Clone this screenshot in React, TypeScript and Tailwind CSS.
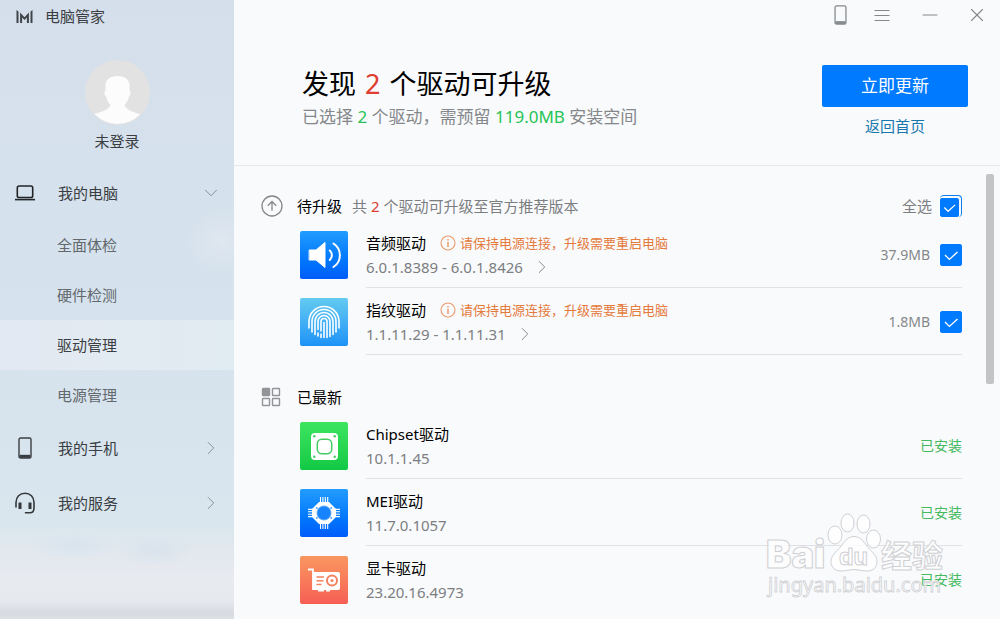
import React, { useState } from 'react';
import { Minus, X, ChevronDown, ChevronRight } from 'lucide-react';
import { clsx } from 'clsx';

type IconProps = { className?: string };

const pending = [
  { id: 'audio', name: '音频驱动', version: '6.0.1.8389 - 6.0.1.8426', size: '37.9MB', Icon: AudioIcon },
  { id: 'finger', name: '指纹驱动', version: '1.1.11.29 - 1.1.11.31', size: '1.8MB', Icon: FingerprintIcon },
];

const latest = [
  { name: 'Chipset驱动', version: '10.1.1.45', Icon: ChipsetIcon },
  { name: 'MEI驱动', version: '11.7.0.1057', Icon: MeiIcon },
  { name: '显卡驱动', version: '23.20.16.4973', Icon: GpuIcon },
];

const subItems = ['全面体检', '硬件检测', '驱动管理', '电源管理'];

function Logo({ className }: IconProps) {
  return (
    <svg viewBox="0 0 16 13" className={className} fill="#3f4449">
      <path d="M0 0l2 1.4V13H0zM16 0l-2 1.4V13h2zM3.6 2.6L8 7.2l4.4-4.6V13h-2V7.6L8 10 5.6 7.6V13h-2z" />
    </svg>
  );
}

function Avatar({ className }: IconProps) {
  return (
    <svg viewBox="0 0 65 65" className={className}>
      <defs>
        <clipPath id="avatar-clip"><circle cx="32.500" cy="32.500" r="31.500" /></clipPath>
      </defs>
      <circle cx="32.500" cy="32.500" r="32.500" fill="#e2e2e2" />
      <g clipPath="url(#avatar-clip)" fill="#fcfcfc">
        <path d="M32.500 16c7.600 0 12 3.600 12 9.500v5c1.700.4 1.200 5.500-.7 6.200-.8 3.800-2.300 6.500-4.300 8.300 1.500 4.600 7.500 6.700 16.500 9.500l1 12H8l1-12.500c9-2.500 15-4.700 16.500-9-2-1.800-3.500-4.500-4.300-8.300-1.900-.7-2.400-5.800-.7-6.200v-5c0-5.900 4.400-9.500 12-9.500z" />
      </g>
    </svg>
  );
}

function LaptopIcon({ className }: IconProps) {
  return (
    <svg viewBox="0 0 20 16" className={className} fill="none" stroke="#222528" strokeWidth="1.6">
      <rect x="2.300" y="1" width="15.400" height="11.500" rx="1.800" />
      <path d="M0 14.600h20" />
    </svg>
  );
}

function PhoneIcon({ className }: IconProps) {
  return (
    <svg viewBox="0 0 14 22" className={className} fill="none" stroke="currentColor" strokeWidth="1.4">
      <rect x="1" y="1" width="12" height="20" rx="1.600" />
      <path d="M1.500 19.300h11" strokeWidth="3" />
    </svg>
  );
}

function MenuIcon({ className }: IconProps) {
  return (
    <svg viewBox="0 0 16 12" className={className} fill="none" stroke="currentColor">
      <path d="M.5 1.500h15M.5 6.500h15M.5 11.500h15" />
    </svg>
  );
}

function HeadsetIcon({ className }: IconProps) {
  return (
    <svg viewBox="0 0 20 22" className={className} fill="none" stroke="#34383c" strokeWidth="1.6" strokeLinecap="round">
      <path d="M1 15v-4.500C1 5 4.800 1.200 10 1.200s9 3.800 9 9.300V16c0 3-1.200 4.800-4 4.800h-4.500" />
      <path d="M5 10.500v6.500M15 10.500v6.500" strokeWidth="3" strokeLinecap="butt" />
    </svg>
  );
}

function UpgradeIcon({ className }: IconProps) {
  return (
    <svg viewBox="0 0 22 22" className={className} fill="none" stroke="#85888b" strokeWidth="1.3">
      <circle cx="11" cy="11" r="10" />
      <path d="M11 15.800V7M6.800 10.700L11 6.500l4.200 4.200" />
    </svg>
  );
}

function GridIcon({ className }: IconProps) {
  return (
    <svg viewBox="0 0 22 22" className={className} fill="none" stroke="#929497" strokeWidth="1.4">
      <rect x="1.500" y="2.500" width="7" height="7" rx=".6" fill="#929497" />
      <rect x="11.500" y="2.500" width="7" height="7" rx=".6" />
      <rect x="1.500" y="12.500" width="7" height="7" rx=".6" />
      <rect x="11.500" y="12.500" width="7" height="7" rx=".6" />
    </svg>
  );
}

function InfoIcon({ className }: IconProps) {
  return (
    <svg viewBox="0 0 16 16" className={className} fill="none" stroke="#ea9a6c" strokeWidth="1.1">
      <circle cx="8" cy="8" r="7" />
      <path d="M8 6.800V12M8 4v1.500" strokeWidth="1.5" />
    </svg>
  );
}

function AudioIcon({ className }: IconProps) {
  return (
    <svg viewBox="0 0 48 48" className={className} fill="none" stroke="#fff" strokeWidth="2" strokeLinecap="round">
      <path d="M9.500 19H16l9-7.500v25L16 29H9.500z" fill="#fff" stroke="#fff" strokeWidth="1" strokeLinejoin="round" />
      <path d="M29.800 19.500c2.800 2.400 2.800 7 0 9.500M33.500 12.500c8.500 5.500 8.500 18 0 23.500" />
    </svg>
  );
}

function FingerprintIcon({ className }: IconProps) {
  return (
    <svg viewBox="0 0 48 48" className={className} fill="none" stroke="#fff" strokeWidth="1.6" strokeLinecap="round">
      <path d="M9 30V23.500a15 15 0 0 1 30 0V30" />
      <path d="M12 34V23.500a12 12 0 0 1 24 0V34" />
      <path d="M15 36.500V23.500a9 9 0 0 1 18 0v13" />
      <path d="M18 31.500v-8a6 6 0 0 1 12 0V38.500M18 35v3" />
      <path d="M21 39.500V36M21 33v-9.500a3 3 0 0 1 6 0v16M24 24.500v15" />
    </svg>
  );
}

function ChipsetIcon({ className }: IconProps) {
  return (
    <svg viewBox="0 0 48 48" className={className} fill="none">
      <rect x="11" y="11" width="27" height="27" rx="4" fill="#fff" />
      <rect x="17.300" y="17.300" width="14.400" height="14.400" rx="4.500" stroke="#43cc62" strokeWidth="1.5" />
      <g fill="#43cc62">
        <circle cx="14.300" cy="14.300" r="1.200" />
        <circle cx="34.700" cy="14.300" r="1.200" />
        <circle cx="14.300" cy="34.700" r="1.200" />
        <circle cx="34.700" cy="34.700" r="1.200" />
      </g>
    </svg>
  );
}

function MeiIcon({ className }: IconProps) {
  return (
    <svg viewBox="0 0 48 48" className={className}>
      <g stroke="#fff" strokeWidth="1.1">
        <path d="M20.500 8v32M22.900 8v32M25.300 8v32M27.700 8v32" />
        <path d="M8 20.400h32M8 22.800h32M8 25.200h32M8 27.600h32" />
      </g>
      <path d="M19 13h10l7 7v8l-7 7H19l-7-7v-8z" fill="#fff" />
      <circle cx="24" cy="24" r="7" fill="#1684ff" stroke="#5aa6f5" />
      <g fill="#4fa5ff">
        <circle cx="16.800" cy="19" r="1" />
        <circle cx="31.200" cy="19" r="1" />
        <circle cx="16.800" cy="29" r="1" />
        <circle cx="31.200" cy="29" r="1" />
      </g>
    </svg>
  );
}

function GpuIcon({ className }: IconProps) {
  return (
    <svg viewBox="0 0 48 48" className={className} fill="none">
      <path d="M8 13.500h5V34" stroke="#fff" strokeWidth="1.800" />
      <path d="M13 16h25q2 0 2 2v14q0 2-2 2h-8v1.500h-4V34h-2v1.500h-6V34h-5z" fill="#fff" />
      <g stroke="#f58160" strokeWidth="1.500">
        <path d="M16.500 21h7.500M16.500 24.800h7M16.500 28.600h5" />
        <circle cx="32" cy="24.500" r="5" strokeWidth="2" />
      </g>
      <circle cx="32" cy="24.500" r="1.500" fill="#f58160" />
    </svg>
  );
}

function CheckBox({ label, checked, onChange, stacked }: {
  label: string;
  checked: boolean;
  onChange: () => void;
  stacked?: boolean;
}) {
  return (
    <span className="grid h-[22px] w-[22px] shrink-0 items-end">
      {stacked && <span className="col-start-1 row-start-1 h-full w-full rounded-sm border-t border-r border-[#0a7cf0]" />}
      <input
        type="checkbox"
        aria-label={label}
        checked={checked}
        onChange={onChange}
        className={clsx(
          'peer col-start-1 row-start-1 appearance-none rounded-xs border border-[#007aff] bg-white checked:bg-[#007aff]',
          stacked ? 'h-[19px] w-[19px]' : 'h-[22px] w-[22px]'
        )}
      />
      <svg
        viewBox="0 0 22 22"
        className={clsx('pointer-events-none invisible col-start-1 row-start-1 peer-checked:visible', stacked ? 'h-[19px] w-[19px]' : 'h-[22px] w-[22px]')}
        fill="none"
        stroke="#fff"
        strokeWidth="1.4"
      >
        <path d="M5 11l4.400 4.400L17.500 8" />
      </svg>
    </span>
  );
}

function Watermark({ className }: IconProps) {
  return (
    <svg viewBox="0 0 200 90" className={className} fill="#fff" fillOpacity=".8" stroke="#cfd0d3" strokeWidth="1">
      <text x="6" y="57" fontSize="38" fontWeight="900" fontFamily="Inter, 'Liberation Sans', sans-serif">Bai</text>
      <ellipse cx="75" cy="24" rx="7" ry="9" />
      <ellipse cx="87.500" cy="12" rx="6.500" ry="9" />
      <ellipse cx="103.500" cy="13" rx="6.500" ry="9" />
      <ellipse cx="113.500" cy="28" rx="7" ry="9" />
      <path d="M94 25.500c7 0 10 6 14 11 4 4.500 9 8 9 14 0 6-4 9.500-10 9.500-5 0-9-1.500-13-1.500S86 60 81 60c-6 0-10-3.500-10-9.500 0-6 5-9.500 9-14 4-5 7-11 14-11z" />
      <text x="79" y="54" fontSize="23" fontWeight="700" fontFamily="Inter, 'Liberation Sans', sans-serif">du</text>
      <text x="121" y="56" fontSize="31" fontWeight="700" fontFamily="'Noto Sans CJK SC', sans-serif">经验</text>
      <text x="8" y="81" fontSize="20" fontFamily="'Noto Sans', sans-serif" strokeWidth=".8">jingyan.baidu.com</text>
    </svg>
  );
}

const tiles: Record<string, string> = {
  音频驱动: 'from-[#229cff] to-[#005cfa]',
  指纹驱动: 'from-[#63caf0] to-[#1c93f8]',
  Chipset驱动: 'from-[#3be560] to-[#10c944]',
  MEI驱动: 'from-[#229cff] to-[#005cfa]',
  显卡驱动: 'from-[#f99660] to-[#f65e55]',
};

function DriverRow({ name, version, Icon, note, last, children }: {
  name: string;
  version: string;
  Icon: React.ComponentType<IconProps>;
  note?: string;
  last?: boolean;
  children: React.ReactNode;
}) {
  return (
    <li className="flex gap-[18px] pb-[10px] pl-[39px]">
      <span className={clsx('h-12 w-12 shrink-0 rounded-xs bg-linear-to-b', tiles[name])}>
        <Icon className="h-12 w-12" />
      </span>
      <div className={clsx('flex flex-1 items-start justify-between border-b pb-2', last ? 'border-transparent' : 'border-[#dfe1e4]')}>
        <div>
          <div className="flex h-6 items-center gap-[14px]">
            <h3 className="text-black">{name}</h3>
            {note && (
              <p className="flex items-center gap-1 text-[13px] text-[#e47a3c]">
                <InfoIcon className="h-4 w-4" />
                {note}
              </p>
            )}
          </div>
          <div className="flex h-6 items-center gap-2 text-[#7c7e81]">
            <span>{version}</span>
            {note && (
              <button aria-label={`${name}详情`}>
                <ChevronRight className="h-[22px] w-[22px]" strokeWidth={1} />
              </button>
            )}
          </div>
        </div>
        <div className="flex h-12 items-center">{children}</div>
      </div>
    </li>
  );
}

export default function App() {
  const [selected, setSelected] = useState<string[]>(['audio', 'finger']);
  const [active, setActive] = useState('驱动管理');
  const allSelected = selected.length === pending.length;

  const toggle = (id: string) =>
    setSelected((prev) => (prev.includes(id) ? prev.filter((s) => s !== id) : [...prev, id]));

  return (
    <div className="flex h-screen overflow-hidden bg-[#f9fafc] font-['Noto_Sans','Noto_Sans_CJK_SC',sans-serif] text-[15px] leading-6 text-[#3a3e42]">
      {/* Sidebar */}
      <aside className="flex w-[234px] shrink-0 flex-col bg-[radial-gradient(ellipse_36px_32px_at_222px_240px,#dfe7f0_0%,transparent_100%),radial-gradient(ellipse_45px_14px_at_75px_546px,#d9e4ee_0%,transparent_100%),radial-gradient(ellipse_40px_16px_at_155px_550px,#d9e3ed_0%,transparent_100%),linear-gradient(to_bottom,#d5dfeb_0%,#d5e1ec_30%,#d7e4ee_70%,#dae6ee_85%,#e2e8ee_89%,#e7eaef_93%,#e6e9ee_97%,#d7dae0_99%,#dcdfe4_100%)]">
        <div className="flex h-8 items-center gap-3 pl-4">
          <Logo className="h-[13px] w-[17px]" />
          <h1>电脑管家</h1>
        </div>
        <div className="flex flex-col items-center gap-1 pt-7 pb-3">
          <Avatar className="h-[65px] w-[65px]" />
          <span>未登录</span>
        </div>
        <nav>
          <button className="flex h-[55px] w-full items-center pr-3 pl-[15px] text-left">
            <LaptopIcon className="h-4 w-5" />
            <span className="ml-[23px] flex-1">我的电脑</span>
            <ChevronDown className="h-[22px] w-[22px] text-[#808890]" strokeWidth={1} />
          </button>
          {subItems.map((item) => (
            <button
              key={item}
              onClick={() => setActive(item)}
              className={clsx(
                'block h-[50px] w-full pl-[57px] text-left',
                active === item ? 'bg-linear-to-r from-[#e3e9f2] to-[#e1ebf2]' : 'text-[#63686d]'
              )}
            >
              {item}
            </button>
          ))}
          <button className="flex h-[55px] w-full items-center pr-3 pl-[15px] text-left">
            <span className="flex w-5 justify-center">
              <PhoneIcon className="h-[22px] w-[14px]" />
            </span>
            <span className="ml-[23px] flex-1">我的手机</span>
            <ChevronRight className="h-[22px] w-[22px] text-[#808890]" strokeWidth={1} />
          </button>
          <button className="flex h-[55px] w-full items-center pr-3 pl-[15px] text-left">
            <HeadsetIcon className="h-[22px] w-5" />
            <span className="ml-[23px] flex-1">我的服务</span>
            <ChevronRight className="h-[22px] w-[22px] text-[#808890]" strokeWidth={1} />
          </button>
        </nav>
      </aside>

      <main className="relative flex min-w-0 flex-1 flex-col">
        {/* Window controls and summary */}
        <header className="border-b border-[#e6e8eb] pb-[27px]">
          <div className="flex h-[30px] items-center justify-end text-[#85888b]">
            <button aria-label="手机" className="flex w-[35px] justify-center">
              <PhoneIcon className="h-5 w-[13px]" />
            </button>
            <button aria-label="菜单" className="flex w-12 justify-center">
              <MenuIcon className="h-3 w-4" />
            </button>
            <button aria-label="最小化" className="flex w-12 justify-center">
              <Minus className="h-6 w-6" strokeWidth={1} />
            </button>
            <button aria-label="关闭" className="flex w-[46px] justify-center">
              <X className="h-[22px] w-[22px]" strokeWidth={1.2} />
            </button>
          </div>
          <div className="flex items-start justify-between pt-[35px] pr-8 pl-[68px]">
            <div>
              <h2 className="text-[27px] leading-[38px] text-black">
                发现 <span className="mx-0.5 text-[#e03c30]">2</span> 个驱动可升级
              </h2>
              <p className="text-[17px] leading-7 text-[#85888b]">
                已选择 <span className="text-[#26c455]">{selected.length}</span> 个驱动，需预留{' '}
                <span className="text-[#26c455]">119.0MB</span> 安装空间
              </p>
            </div>
            <div className="flex flex-col items-center gap-[7px]">
              <button className="h-[42px] w-[146px] rounded-xs bg-[#007aff] text-[17px] text-white">立即更新</button>
              <a href="#home" className="text-[#1778ad]">返回首页</a>
            </div>
          </div>
        </header>

        {/* Driver lists */}
        <div className="flex min-h-0 flex-1">
          <div className="min-w-0 flex-1 overflow-hidden pt-[29px] pr-6 pl-[27px]">
            <section>
              <div className="mb-[14px] flex h-[22px] items-center">
                <UpgradeIcon className="h-[22px] w-[22px]" />
                <h2 className="ml-[14px] text-black">待升级</h2>
                <p className="ml-[10px] flex-1 text-[#7c7e81]">
                  共 <span className="text-[#d9402f]">2</span> 个驱动可升级至官方推荐版本
                </p>
                <span className="mr-2 text-[#7c7e81]">全选</span>
                <CheckBox
                  label="全选"
                  stacked
                  checked={allSelected}
                  onChange={() => setSelected(allSelected ? [] : pending.map((d) => d.id))}
                />
              </div>
              <ul>
                {pending.map((d) => (
                  <DriverRow key={d.id} {...d} note="请保持电源连接，升级需要重启电脑">
                    <span className="mr-[10px] text-sm text-[#85888b]">{d.size}</span>
                    <CheckBox label={d.name} checked={selected.includes(d.id)} onChange={() => toggle(d.id)} />
                  </DriverRow>
                ))}
              </ul>
            </section>

            <section className="pt-[21px]">
              <div className="mb-[14px] flex h-[22px] items-center">
                <GridIcon className="h-[22px] w-[22px]" />
                <h2 className="ml-[14px] text-black">已最新</h2>
              </div>
              <ul>
                {latest.map((d, i) => (
                  <DriverRow key={d.name} {...d} last={i === latest.length - 1}>
                    <span className="text-sm text-[#45b960]">已安装</span>
                  </DriverRow>
                ))}
              </ul>
            </section>
          </div>
          <div className="w-[14px] shrink-0 pt-2">
            <div className="h-[210px] w-2 rounded-xs bg-[#c2c4c6]" />
          </div>
        </div>

        <Watermark className="pointer-events-none absolute right-10 bottom-[18px] h-[90px] w-[200px]" />
      </main>
    </div>
  );
}
